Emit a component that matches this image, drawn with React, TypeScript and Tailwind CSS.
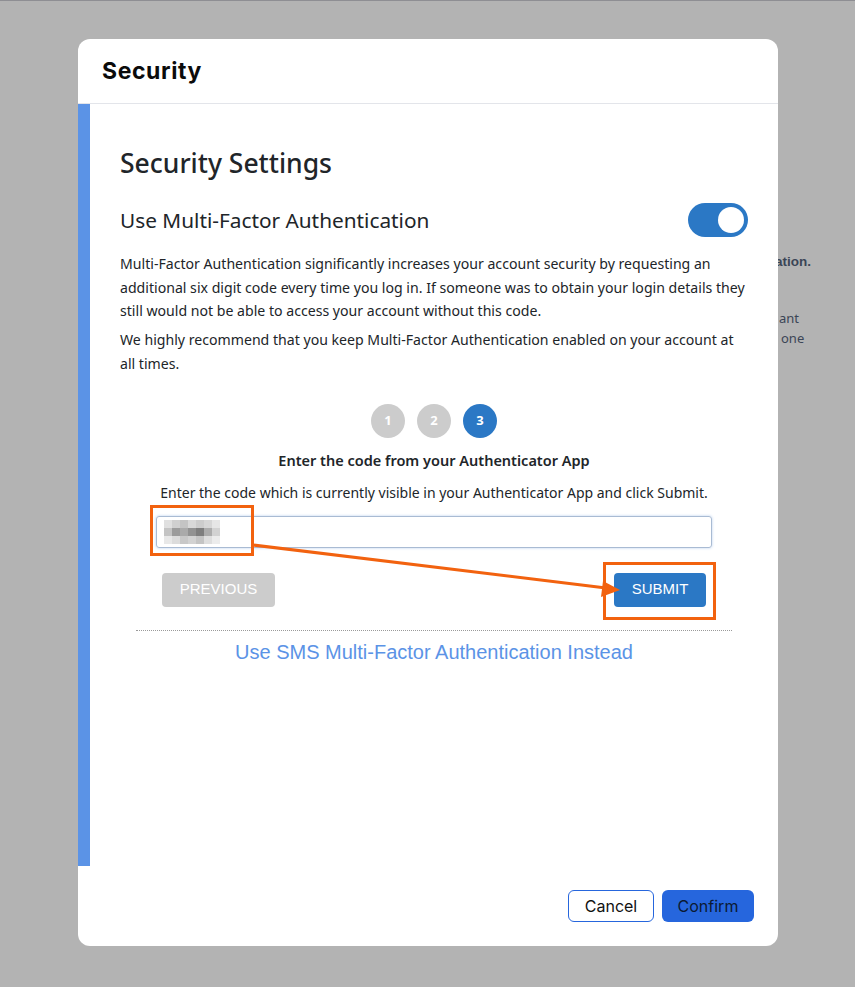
import React from "react";

const pix = [
  ["#e0e0e0", "#d0d0d0", "#c4c4c4", "#d8d8d8", "#cccccc", "#d6d6d6", "#e6e6e6"],
  ["#c4c4c4", "#9c9c9c", "#aaaaaa", "#929292", "#7e7e7e", "#acacac", "#d2d2d2"],
  ["#e8e8e8", "#dcdcdc", "#c8c8c8", "#d2d2d2", "#c4c4c4", "#dedede", "#ececec"],
];

export default function App() {
  return (
    <div
      className="relative w-[855px] h-[987px] overflow-hidden bg-[#b3b3b3]"
      style={{ fontFamily: '"Noto Sans", sans-serif' }}
    >
      <div className="h-px bg-[#8e8e93]" />
      {/* background page text peeking out from behind the dialog */}
      <div
        className="absolute left-[775px] top-[252px] text-[13.5px] font-bold text-[#3b4556] leading-[20px]"
        style={{ fontFamily: '"Liberation Sans", Arial, sans-serif' }}
      >
        ation.
      </div>
      <div className="absolute left-[779px] top-[308px] text-[13px] text-[#3b4556] leading-[20px]">
        ant
      </div>
      <div className="absolute left-[781px] top-[328px] text-[13px] text-[#3b4556] leading-[20px]">
        one
      </div>

      {/* modal */}
      <div className="absolute left-[78px] top-[39px] w-[700px] h-[907px] bg-white rounded-[12px] flex flex-col overflow-hidden">
        <div className="h-[65px] shrink-0 border-b border-[#e3e5ea] flex items-center px-[24px]">
          <span
            className="text-[23px] font-bold text-[#0b0b0b] tracking-[0.6px]"
            style={{ fontFamily: 'Inter, sans-serif' }}
          >
            Security
          </span>
        </div>
        <div className="flex h-[762px] shrink-0">
          <div className="w-[12px] bg-[#5b93e6] shrink-0" />
          <div className="flex-1 pl-[30px] pr-[30px] pt-[40px] text-[#212529]">
            <h2 className="text-[26.5px] leading-[38px] font-medium">Security Settings</h2>
            <div className="flex items-center justify-between mt-[21px]">
              <span className="text-[20.8px] leading-[30px]">Use Multi-Factor Authentication</span>
              <div className="w-[60px] h-[34px] rounded-full bg-[#2b78c5] flex items-center justify-end pr-[4px]">
                <div className="w-[26px] h-[26px] rounded-full bg-white" />
              </div>
            </div>
            <p className="mt-[15px] text-[14.12px] leading-[23.5px]">
              Multi-Factor Authentication significantly increases your account security by requesting an additional six digit code every time you log in. If someone was to obtain your login details they still would not be able to access your account without this code.
            </p>
            <p className="mt-[5px] text-[14.12px] leading-[24px]">
              We highly recommend that you keep Multi-Factor Authentication enabled on your account at all times.
            </p>
            <div className="flex justify-center gap-[12px] mt-[28px]">
              <div className="w-[34px] h-[34px] rounded-full bg-[#cccccc] text-white text-[13px] font-bold flex items-center justify-center">1</div>
              <div className="w-[34px] h-[34px] rounded-full bg-[#cccccc] text-white text-[13px] font-bold flex items-center justify-center">2</div>
              <div className="w-[34px] h-[34px] rounded-full bg-[#2b78c5] text-white text-[13px] font-bold flex items-center justify-center">3</div>
            </div>
            <div className="text-center text-[14.5px] font-semibold mt-[10px] leading-[24px]">
              Enter the code from your Authenticator App
            </div>
            <div className="text-center text-[14px] mt-[9px] leading-[24px]">
              Enter the code which is currently visible in your Authenticator App and click Submit.
            </div>
            <div className="px-[36px] mt-[11px]">
              <div className="h-[32px] border border-[#a9bbd3] rounded-[3px] shadow-[0_0_3px_#b9d0ee] flex items-center pl-[7px]">
                <svg width="56" height="24" viewBox="0 0 56 24">
                  {pix.map((row, r) =>
                    row.map((c, i) => (
                      <rect key={`${r}-${i}`} x={i * 8} y={r * 8} width="8" height="8" fill={c} />
                    ))
                  )}
                </svg>
              </div>
            </div>
            <div
              className="flex justify-between px-[42px] mt-[25px]"
              style={{ fontFamily: '"Liberation Sans", Arial, sans-serif' }}
            >
              <button className="w-[113px] h-[34px] rounded-[4px] bg-[#cccccc] text-white text-[15px]">PREVIOUS</button>
              <button className="w-[92px] h-[34px] rounded-[4px] bg-[#2b78c5] text-white text-[15px]">SUBMIT</button>
            </div>
            <div className="mx-[16px] mt-[23px] border-t border-dotted border-[#9a9a9a]" />
            <div
              className="text-center text-[20px] text-[#5b93e6] mt-[6px]"
              style={{ fontFamily: '"Liberation Sans", Arial, sans-serif' }}
            >
              Use SMS Multi-Factor Authentication Instead
            </div>
          </div>
        </div>
        <div className="flex-1 flex items-center justify-end gap-[8px] pr-[24px]">
          <button className="w-[86px] h-[32px] rounded-[6px] border border-[#2666dd] bg-white text-[16px] text-[#111]" style={{ fontFamily: 'Inter, sans-serif' }}>Cancel</button>
          <button className="w-[92px] h-[32px] rounded-[6px] bg-[#2666dd] text-[16px] text-[#0b1a33]" style={{ fontFamily: 'Inter, sans-serif' }}>Confirm</button>
        </div>
      </div>

      {/* annotation overlay */}
      <svg className="absolute left-0 top-0 pointer-events-none" width="855" height="987" viewBox="0 0 855 987">
        <rect x="151.5" y="506.5" width="101" height="48" fill="none" stroke="#f2620f" strokeWidth="3" />
        <rect x="604.5" y="563.5" width="110" height="55" fill="none" stroke="#f2620f" strokeWidth="3" />
        <line x1="253" y1="545" x2="606" y2="588" stroke="#f2620f" strokeWidth="3" />
        <polygon points="620,590 603,581 601,597" fill="#f2620f" />
      </svg>
    </div>
  );
}
